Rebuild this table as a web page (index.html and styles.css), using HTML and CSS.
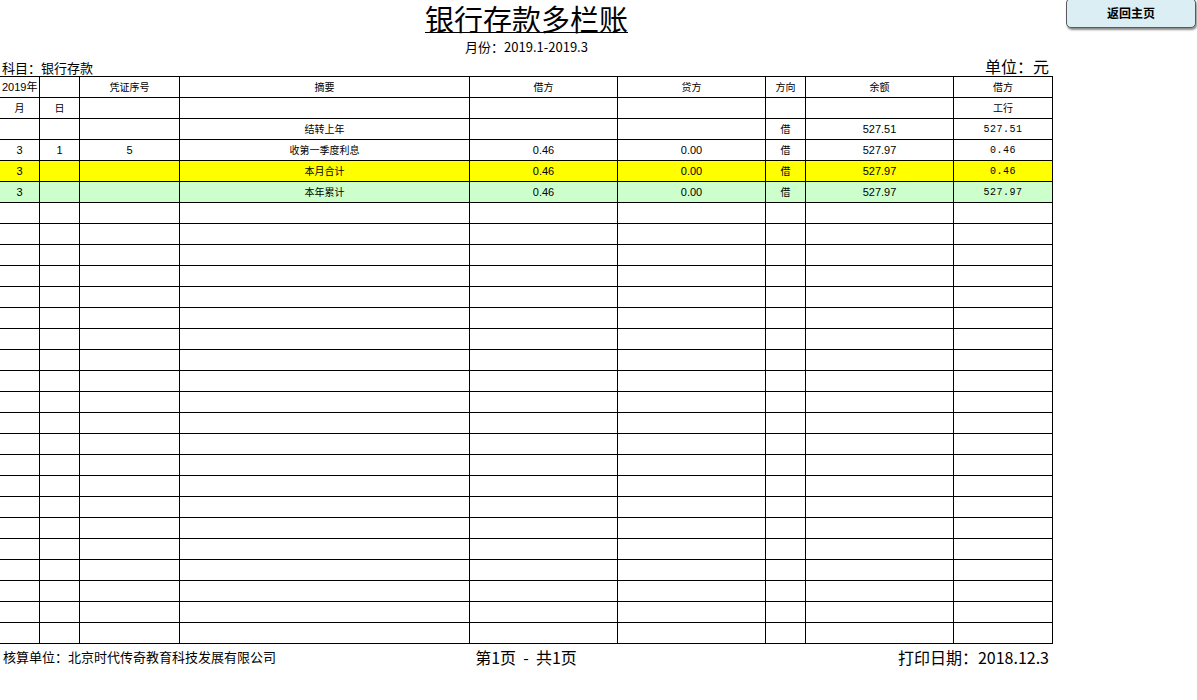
FILE: index.html
```html
<!DOCTYPE html>
<html lang="zh-CN">
<head>
<meta charset="utf-8">
<title>银行存款多栏账</title>
<link rel="stylesheet" href="styles.css">
</head>
<body>
<div class="page">
  <h1 class="title"><span>银行存款多栏账</span></h1>
  <div class="period">月份：2019.1-2019.3</div>
  <div class="meta">
    <span class="subject">科目：银行存款</span>
    <span class="unit">单位：元</span>
  </div>
  <table class="ledger">
    <colgroup>
      <col class="c-m"><col class="c-d"><col class="c-no"><col class="c-sum"><col class="c-amt"><col class="c-amt"><col class="c-dir"><col class="c-amt"><col class="c-last">
    </colgroup>
    <thead>
      <tr class="hd"><td class="year">2019年</td><td></td><td>凭证序号</td><td>摘要</td><td>借方</td><td>贷方</td><td>方向</td><td>余额</td><td>借方</td></tr>
      <tr class="hd"><td>月</td><td>日</td><td></td><td></td><td></td><td></td><td></td><td></td><td>工行</td></tr>
    </thead>
    <tbody>
      <tr><td></td><td></td><td></td><td class="cn">结转上年</td><td></td><td></td><td class="cn">借</td><td>527.51</td><td class="mono">527.51</td></tr>
      <tr><td>3</td><td>1</td><td>5</td><td class="cn">收第一季度利息</td><td>0.46</td><td>0.00</td><td class="cn">借</td><td>527.97</td><td class="mono">0.46</td></tr>
      <tr class="month"><td>3</td><td></td><td></td><td class="cn">本月合计</td><td>0.46</td><td>0.00</td><td class="cn">借</td><td>527.97</td><td class="mono">0.46</td></tr>
      <tr class="year-total"><td>3</td><td></td><td></td><td class="cn">本年累计</td><td>0.46</td><td>0.00</td><td class="cn">借</td><td>527.97</td><td class="mono">527.97</td></tr>
      <tr><td></td><td></td><td></td><td></td><td></td><td></td><td></td><td></td><td></td></tr>
      <tr><td></td><td></td><td></td><td></td><td></td><td></td><td></td><td></td><td></td></tr>
      <tr><td></td><td></td><td></td><td></td><td></td><td></td><td></td><td></td><td></td></tr>
      <tr><td></td><td></td><td></td><td></td><td></td><td></td><td></td><td></td><td></td></tr>
      <tr><td></td><td></td><td></td><td></td><td></td><td></td><td></td><td></td><td></td></tr>
      <tr><td></td><td></td><td></td><td></td><td></td><td></td><td></td><td></td><td></td></tr>
      <tr><td></td><td></td><td></td><td></td><td></td><td></td><td></td><td></td><td></td></tr>
      <tr><td></td><td></td><td></td><td></td><td></td><td></td><td></td><td></td><td></td></tr>
      <tr><td></td><td></td><td></td><td></td><td></td><td></td><td></td><td></td><td></td></tr>
      <tr><td></td><td></td><td></td><td></td><td></td><td></td><td></td><td></td><td></td></tr>
      <tr><td></td><td></td><td></td><td></td><td></td><td></td><td></td><td></td><td></td></tr>
      <tr><td></td><td></td><td></td><td></td><td></td><td></td><td></td><td></td><td></td></tr>
      <tr><td></td><td></td><td></td><td></td><td></td><td></td><td></td><td></td><td></td></tr>
      <tr><td></td><td></td><td></td><td></td><td></td><td></td><td></td><td></td><td></td></tr>
      <tr><td></td><td></td><td></td><td></td><td></td><td></td><td></td><td></td><td></td></tr>
      <tr><td></td><td></td><td></td><td></td><td></td><td></td><td></td><td></td><td></td></tr>
      <tr><td></td><td></td><td></td><td></td><td></td><td></td><td></td><td></td><td></td></tr>
      <tr><td></td><td></td><td></td><td></td><td></td><td></td><td></td><td></td><td></td></tr>
      <tr><td></td><td></td><td></td><td></td><td></td><td></td><td></td><td></td><td></td></tr>
      <tr><td></td><td></td><td></td><td></td><td></td><td></td><td></td><td></td><td></td></tr>
      <tr><td></td><td></td><td></td><td></td><td></td><td></td><td></td><td></td><td></td></tr>
    </tbody>
  </table>
  <div class="footer">
    <span class="org">核算单位：北京时代传奇教育科技发展有限公司</span>
    <span class="pager">第1页  -  共1页</span>
    <span class="printed">打印日期：2018.12.3</span>
  </div>
</div>
<button class="home-btn" type="button">返回主页</button>
</body>
</html>
```

FILE: styles.css
```css
html, body {
  margin: 0;
  padding: 0;
  background: #ffffff;
  color: #000000;
  font-family: "Noto Sans CJK SC", "Liberation Sans", sans-serif;
}

.page {
  width: 1053px;
  display: flex;
  flex-direction: column;
}

.title {
  margin: 0;
  height: 36px;
  display: flex;
  justify-content: center;
  align-items: flex-start;
  font-size: 29px;
  font-weight: 400;
  line-height: 38px;
}

.title span {
  display: inline-block;
  margin-top: -1px;
  text-decoration: underline;
  text-decoration-thickness: 1px;
  text-underline-offset: 1px;
}

.period {
  height: 22px;
  line-height: 22px;
  text-align: center;
  font-size: 13px;
}

.meta {
  display: flex;
  justify-content: space-between;
  align-items: flex-end;
  height: 18px;
  padding: 0 4px 0 2px;
}

.subject {
  font-size: 13px;
  line-height: 16px;
}

.unit {
  font-size: 16px;
  line-height: 19px;
}

.ledger {
  border-collapse: collapse;
  table-layout: fixed;
  width: 1054px;
  margin-left: -1px;
}

.c-m, .c-d { width: 40px; }
.c-no { width: 100px; }
.c-sum { width: 290px; }
.c-amt { width: 148px; }
.c-dir { width: 40px; }
.c-last { width: 99px; }

.ledger td {
  border: 1px solid #000;
  height: 20px;
  padding: 0;
  text-align: center;
  vertical-align: middle;
  font-family: "Liberation Sans", "Noto Sans CJK SC", sans-serif;
  font-size: 11px;
  line-height: 20px;
  white-space: nowrap;
  overflow: hidden;
}

.ledger .hd td {
  font-family: "Noto Sans CJK SC", sans-serif;
  font-size: 10px;
}

.ledger .hd td.year {
  font-family: "Liberation Sans", "Noto Sans CJK SC", sans-serif;
  font-size: 11px;
  text-align: left;
  padding-left: 2px;
}

.ledger td.cn {
  font-family: "Noto Sans CJK SC", sans-serif;
  font-size: 10px;
}

.ledger td.mono {
  font-family: "Liberation Mono", monospace;
  font-size: 10px;
  letter-spacing: 0.5px;
  padding-top: 2px;
  line-height: 18px;
  height: 18px;
}

.ledger .month td { background: #ffff00; }
.ledger .year-total td { background: #ccffcc; }

.footer {
  display: grid;
  grid-template-columns: 1fr auto 1fr;
  align-items: start;
  height: 28px;
  padding: 2px 4px 0 3px;
  line-height: 22px;
}

.org {
  font-size: 13px;
}

.pager {
  font-size: 16px;
  text-align: center;
  white-space: pre;
}

.printed {
  font-size: 16px;
  text-align: right;
}

.home-btn {
  position: absolute;
  top: -2px;
  left: 1066px;
  width: 130px;
  height: 30px;
  box-sizing: border-box;
  border: 1px solid #5a5a5a;
  border-radius: 5px;
  background: #dbeef4;
  box-shadow: 1px 2px 2px rgba(0, 0, 0, 0.45);
  font-family: "Noto Sans CJK SC", sans-serif;
  font-size: 12px;
  font-weight: 700;
  color: #000;
  padding: 0;
  line-height: 28px;
  cursor: pointer;
}
```
